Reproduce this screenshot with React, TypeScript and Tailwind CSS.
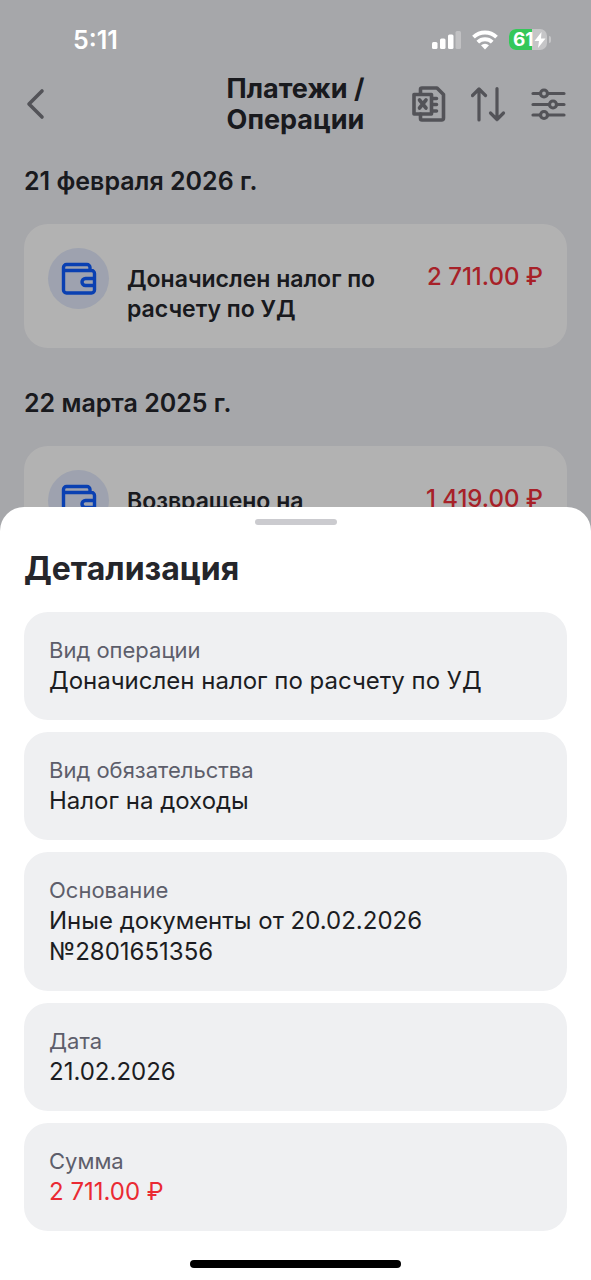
import React from "react";

const details = [
  { label: "Вид операции", value: "Доначислен налог по расчету по УД" },
  { label: "Вид обязательства", value: "Налог на доходы" },
  { label: "Основание", value: "Иные документы от 20.02.2026 №2801651356" },
  { label: "Дата", value: "21.02.2026" },
  { label: "Сумма", value: "2 711.00 ₽", negative: true },
];

const operations = [
  { date: "21 февраля 2026 г.", title: "Доначислен налог по расчету по УД", amount: "2 711.00 ₽" },
  { date: "22 марта 2025 г.", title: "Возвращено на расчетный счет", amount: "1 419.00 ₽" },
];

function StatusBar() {
  return (
    <div className="relative z-10 flex h-[73px] items-center justify-between pt-[6px] pr-10 pl-[73px] text-white">
      <span className="text-[25px] leading-8 font-semibold">5:11</span>
      <div className="flex items-center gap-[11px]">
        <svg className="h-5 w-[30px]" viewBox="0 0 30 20" fill="currentColor" aria-hidden="true">
          <rect x="1" y="12" width="5.500" height="7" rx="1.500" />
          <rect x="9" y="8.500" width="5.500" height="10.500" rx="1.500" />
          <rect x="17" y="4.500" width="5.500" height="14.500" rx="1.500" />
          <rect x="24.500" y="1" width="5.500" height="18" rx="1.500" opacity=".3" />
        </svg>
        <svg className="h-5 w-[26px]" viewBox="0 0 26 20" fill="none" stroke="currentColor" strokeWidth="3.900" aria-hidden="true">
          <path d="M1.500 7.200a16.500 16.500 0 0 1 23 0" />
          <path d="M5.800 12.100a10.400 10.400 0 0 1 14.400 0" />
          <path d="M13 19.500l-4-4.200a6 6 0 0 1 8 0z" fill="currentColor" stroke="none" />
        </svg>
        <div className="flex items-center gap-[2px]">
          <div className="relative flex h-[21px] w-[38px] items-center overflow-hidden rounded-[7px] bg-white/35">
            <div className="absolute inset-y-0 left-0 w-[23px] bg-[#34c759]" />
            <span className="relative pl-1 text-[19px] leading-[22px] font-bold">61</span>
            <svg className="relative h-4 w-3" viewBox="0 0 12 16" fill="currentColor" aria-hidden="true">
              <path d="M7.500 0L.500 9h4.500l-1 7 7.500-9.500H7z" />
            </svg>
          </div>
          <div className="h-[7px] w-[2px] rounded-r-full bg-white/35" />
        </div>
      </div>
    </div>
  );
}

function ExcelIcon() {
  return (
    <svg className="size-9" viewBox="0 0 36 36" fill="none" stroke="currentColor" strokeWidth="3.600" strokeLinejoin="round" strokeLinecap="round" aria-hidden="true">
      <path d="M9.500 8V3.500a1.500 1.500 0 0 1 1.500-1.500h15l6.500 6.500v23.500a2 2 0 0 1-2 2H11a1.500 1.500 0 0 1-1.500-1.500V28" />
      <path d="M3 8.500h17.500v19.500H3z" />
      <path d="M8.500 14l6.500 8M15 14L8.500 22" />
      <path d="M22 12.500h3.500M22 18.500h3.500M22 25h3.500" />
    </svg>
  );
}

function SortIcon() {
  return (
    <svg className="size-9" viewBox="0 0 36 36" fill="none" stroke="currentColor" strokeWidth="3.200" strokeLinejoin="round" strokeLinecap="round" aria-hidden="true">
      <path d="M8 34V3M1.500 9.500L8 3l6.500 6.500" />
      <path d="M26 2.500V33.500M19.500 27l6.500 6.500 6.500-6.500" />
    </svg>
  );
}

function FilterIcon() {
  return (
    <svg className="size-9" viewBox="0 0 36 36" fill="none" stroke="currentColor" strokeWidth="3.200" strokeLinecap="round" aria-hidden="true">
      <path d="M2 7.500h7.500M16.500 7.500h16.500M2 18.500h16.500M25.500 18.500h7.500M2 29h7.500M16.500 29h16.500" />
      <circle cx="13" cy="7.500" r="3.500" />
      <circle cx="22" cy="18.500" r="3.500" />
      <circle cx="13" cy="29" r="3.500" />
    </svg>
  );
}

function WalletIcon() {
  return (
    <svg className="size-9" viewBox="0 0 36 36" fill="none" stroke="currentColor" strokeWidth="3.400" strokeLinejoin="round" aria-hidden="true">
      <path d="M29 9.500V6.500a3 3 0 0 0-3-3H5.500a3 3 0 0 0-3 3V29a3 3 0 0 0 3 3H30.500a3 3 0 0 0 3-3V12.500a3 3 0 0 0-3-3H2.500" />
      <path d="M33.500 17.500H24.500a3.500 3.500 0 0 0 0 7H33.500" />
    </svg>
  );
}

function Header() {
  return (
    <header className="grid grid-cols-[1fr_auto_1fr] items-center px-6 text-[#77787f]">
      <button type="button" aria-label="Назад" className="w-6">
        <svg className="h-8 w-6" viewBox="0 0 24 32" fill="none" stroke="currentColor" strokeWidth="3.600" strokeLinecap="round" strokeLinejoin="round" aria-hidden="true">
          <path d="M18 3L5 16l13 13" />
        </svg>
      </button>
      <h1 className="text-[27px] leading-[31px] font-bold text-[#25262c]">
        Платежи /<br />
        Операции
      </h1>
      <div className="flex justify-end gap-6">
        <button type="button" aria-label="Экспорт в Excel"><ExcelIcon /></button>
        <button type="button" aria-label="Сортировка"><SortIcon /></button>
        <button type="button" aria-label="Фильтр"><FilterIcon /></button>
      </div>
    </header>
  );
}

export default function App() {
  return (
    <div className="grid min-h-screen bg-[#eeeff4] font-['Inter','Liberation_Sans',sans-serif]">
      <div className="relative overflow-hidden [grid-area:1/1]">
        <StatusBar />
        <Header />
        <main className="flex flex-col gap-[39px] px-6 pt-[30px]">
          {operations.map((op) => (
            <section key={op.date}>
              <h2 className="mb-[27px] text-[25px] leading-8 font-semibold text-[#25262c]">{op.date}</h2>
              <article className="flex items-start rounded-3xl bg-white p-6">
                <div className="flex size-[61px] shrink-0 items-center justify-center rounded-full bg-[#e2e9fb] text-[#0f5cff]">
                  <WalletIcon />
                </div>
                <h3 className="min-w-0 flex-1 pt-4 pl-[18px] text-[23px] leading-[30px] font-semibold text-[#25262c]">
                  {op.title}
                </h3>
                <p className="shrink-0 pt-[14px] text-[24px] leading-[30px] font-medium text-[#f0303a]">{op.amount}</p>
              </article>
            </section>
          ))}
        </main>
        <div className="absolute inset-0 bg-black/30" />
      </div>

      <section
        role="dialog"
        aria-labelledby="sheet-title"
        className="relative flex flex-col self-end rounded-t-3xl bg-white px-6 pt-3 pb-3 [grid-area:1/1]"
      >
        <div className="h-[6px] w-[82px] self-center rounded-full bg-[#cbcbcf]" />
        <h2 id="sheet-title" className="mt-[26px] mb-[25px] text-[32px] leading-9 font-bold text-[#25262b]">
          Детализация
        </h2>
        <dl className="flex flex-col gap-3">
          {details.map((item) => (
            <div key={item.label} className="rounded-3xl bg-[#eff0f2] px-[25px] py-6">
              <dt className="text-[22px] leading-[29px] text-[#5d5e6b]">{item.label}</dt>
              <dd className={`text-[24px] leading-[31px] ${item.negative ? "text-[#ea2a33]" : "text-[#1c1d22]"}`}>
                {item.value}
              </dd>
            </div>
          ))}
        </dl>
        <div className="mt-[29px] h-2 w-[211px] self-center rounded-full bg-black" />
      </section>
    </div>
  );
}
